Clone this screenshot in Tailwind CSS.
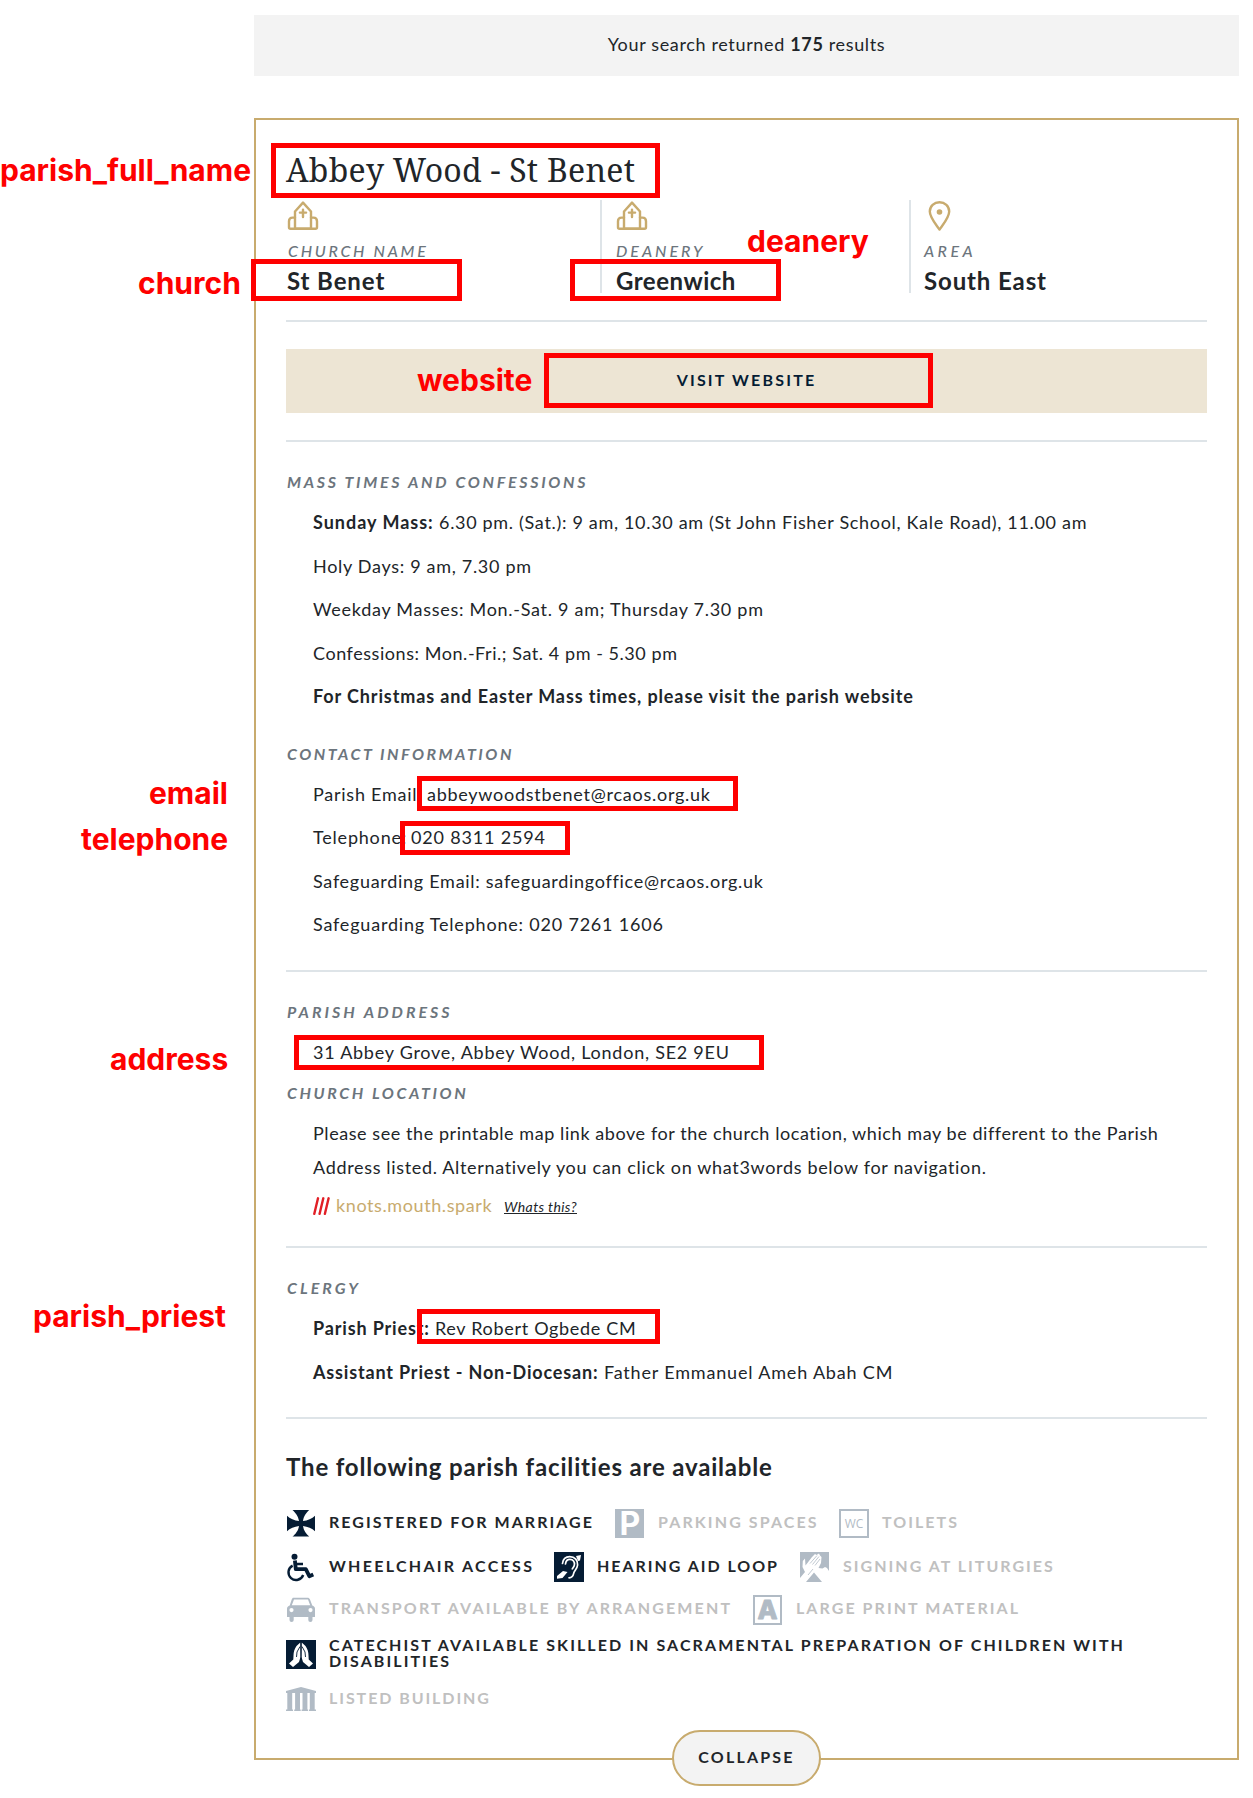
<!DOCTYPE html>
<html lang="en">
<head>
<meta charset="utf-8">
<title>Parish search results</title>
<script src="https://cdn.jsdelivr.net/npm/@tailwindcss/browser@4"></script>
</head>
<body class="bg-white text-[#212529] font-['Lato',sans-serif]">
<svg class="hidden">
  <symbol id="church" viewBox="0 0 32 32">
    <g fill="none" stroke="#c8ab6e" stroke-width="2.4" stroke-linejoin="round" stroke-linecap="round">
      <path d="M8 28.8V11.5L16 2.6l8 8.9v17.3z"/>
      <path d="M8 17.6H5.6Q2 17.6 2 21.2v6.1q0 1.5 1.5 1.5H28.5q1.5 0 1.5-1.5v-6.1q0-3.600-3.600-3.600H24"/>
      <path d="M16 9.600v7.400M12.900 12.600h6.200"/>
    </g>
  </symbol>
</svg>
<main class="relative w-[1253px] h-[1798px] overflow-hidden whitespace-nowrap pt-[15px] pl-[254px]">
  <p class="w-[985px] h-[61px] bg-[#f3f3f3] text-center text-[18px] leading-[58px] tracking-[0.65px]">Your search returned <b>175</b> results</p>

  <article class="relative mt-[42px] w-[985px] h-[1642px] border-2 border-[#c8ab6e] px-[30px]">
    <h1 class="mt-[30px] text-[32px] leading-[40px] font-['Noto_Serif',serif] tracking-[0.24px]">Abbey Wood - St Benet</h1>

    <div class="mt-[10px] h-[93px] flex">
      <div class="w-[314px] pl-px">
        <svg class="size-8"><use href="#church"/></svg>
        <p class="mt-2 pl-px h-[22px] leading-[22px] text-[16px] italic font-medium text-[#6c757d] tracking-[2.700px]">CHURCH NAME</p>
        <p class="mt-[5px] h-[27px] leading-[27px] text-[24px] font-bold tracking-[0.900px]">St Benet</p>
      </div>
      <div class="w-[309px] border-l-2 border-[#dee4e8] pl-3.5">
        <svg class="size-8"><use href="#church"/></svg>
        <p class="mt-2 h-[22px] leading-[22px] text-[16px] italic font-medium text-[#6c757d] tracking-[3px]">DEANERY</p>
        <p class="mt-[5px] h-[27px] leading-[27px] text-[24px] font-bold tracking-[0.500px]">Greenwich</p>
      </div>
      <div class="border-l-2 border-[#dee4e8] pl-[13px]">
        <svg class="size-8" viewBox="0 0 32 32" fill="none" stroke="#c8ab6e" stroke-width="2.400" stroke-linejoin="round"><path d="M15.500 29.600C12 24.500 5.800 17.500 5.800 11.500a9.700 9.300 0 0 1 19.400 0c0 6-6.200 13-9.700 18.100z"/><circle cx="15.500" cy="12" r="2.800" fill="#c8ab6e" stroke="none"/></svg>
        <p class="mt-2 h-[22px] leading-[22px] text-[16px] italic font-medium text-[#6c757d] tracking-[3.400px]">AREA</p>
        <p class="mt-[5px] h-[27px] leading-[27px] text-[24px] font-bold tracking-[0.870px]">South East</p>
      </div>
    </div>

    <hr class="mt-[27px] border-t-2 border-[#dee4e8]">
    <a class="mt-[27px] block h-16 bg-[#ede5d4] text-center text-[16px] leading-[62px] font-bold text-[#051c34] tracking-[2.200px]">VISIT WEBSITE</a>
    <hr class="mt-[27px] border-t-2 border-[#dee4e8]">

    <h2 class="mt-[29px] pl-px h-[22px] leading-[22px] text-[16px] italic font-bold text-[#6c757d] tracking-[2.700px]">MASS TIMES AND CONFESSIONS</h2>
    <div class="mt-[12px] pl-[27px] mb-[30px] flex flex-col gap-[9.500px] text-[18px] leading-[34px]">
      <p><b class="tracking-[0.980px]">Sunday Mass: </b><span class="tracking-[0.680px]">6.30 pm. (Sat.): 9 am, 10.30 am (St John Fisher School, Kale Road), 11.00 am</span></p>
      <p class="tracking-[0.690px]">Holy Days: 9 am, 7.30 pm</p>
      <p class="tracking-[0.720px]">Weekday Masses: Mon.-Sat. 9 am; Thursday 7.30 pm</p>
      <p class="tracking-[0.554px]">Confessions: Mon.-Fri.; Sat. 4 pm - 5.30 pm</p>
      <p class="-mt-[0.500px] font-bold tracking-[0.886px]">For Christmas and Easter Mass times, please visit the parish website</p>
    </div>

    <h2 class="pl-px h-[22px] leading-[22px] text-[16px] italic font-bold text-[#6c757d] tracking-[2.500px]">CONTACT INFORMATION</h2>
    <div class="mt-[12px] pl-[27px] flex flex-col gap-[9.500px] text-[18px] leading-[34px]">
      <p class="flex"><span class="w-[114px] tracking-[0.750px]">Parish Email:</span><span class="tracking-[0.738px]">abbeywoodstbenet@rcaos.org.uk</span></p>
      <p class="flex"><span class="w-[98px] tracking-[0.800px]">Telephone:</span><span class="tracking-[0.827px]">020 8311 2594</span></p>
      <p class="tracking-[0.718px]">Safeguarding Email: safeguardingoffice@rcaos.org.uk</p>
      <p class="tracking-[0.800px]">Safeguarding Telephone: 020 7261 1606</p>
    </div>
    <hr class="mt-[29px] border-t-2 border-[#dee4e8]">

    <h2 class="mt-[29px] pl-px h-[22px] leading-[22px] text-[16px] italic font-bold text-[#6c757d] tracking-[3px]">PARISH ADDRESS</h2>
    <p class="mt-[12px] pl-[27px] text-[18px] leading-[34px] tracking-[0.750px]">31 Abbey Grove, Abbey Wood, London, SE2 9EU</p>
    <h2 class="mt-[13px] pl-px h-[22px] leading-[22px] text-[16px] italic font-bold text-[#6c757d] tracking-[2.600px]">CHURCH LOCATION</h2>
    <p class="mt-[12px] pl-[27px] text-[18px] leading-[34px]"><span class="tracking-[0.571px]">Please see the printable map link above for the church location, which may be different to the Parish</span><br><span class="tracking-[0.666px]">Address listed. Alternatively you can click on what3words below for navigation.</span></p>
    <div class="mt-[10px] pl-[27px] h-[22px] flex items-center text-[18px] leading-[22px]">
      <svg class="w-[17px] h-[18px] mr-1.5 mt-0.5" viewBox="0 0 17 18" stroke="#e11f26" stroke-width="2.400" stroke-linecap="round"><path d="M1.300 16.800L5 1.300M6.600 16.800L10.300 1.300M11.900 16.800L15.600 1.300"/></svg>
      <a class="w-[168px] text-[#c8ab6e] tracking-[0.600px]">knots.mouth.spark</a>
      <a class="pt-1 text-[14px] italic underline tracking-[0.400px]">Whats this?</a>
    </div>
    <hr class="mt-[30px] border-t-2 border-[#dee4e8]">

    <h2 class="mt-[29px] pl-px h-[22px] leading-[22px] text-[16px] italic font-bold text-[#6c757d] tracking-[3px]">CLERGY</h2>
    <div class="mt-[12px] pl-[27px] flex flex-col gap-[9.500px] text-[18px] leading-[34px]">
      <p><b class="tracking-[0.850px]">Parish Priest: </b><span class="tracking-[0.690px]">Rev Robert Ogbede CM</span></p>
      <p class="tracking-[0.830px]"><b>Assistant Priest - Non-Diocesan:</b> Father Emmanuel Ameh Abah CM</p>
    </div>
    <hr class="mt-[28.500px] border-t-2 border-[#dee4e8]">

    <h3 class="mt-[33px] leading-[30px] text-[24px] font-bold tracking-[0.832px]">The following parish facilities are available</h3>

    <div class="mt-[27px] text-[16px] font-bold leading-[26px] [&_svg]:size-[30px] [&_svg]:shrink-0 [&_svg]:overflow-visible">
      <div class="flex h-[43px]">
        <div class="flex gap-[13px] w-[329px]">
          <svg viewBox="0 0 30 30" fill="#051c34"><path d="M6.500.9h16.700c-2.900 2.500-5.700 6.700-6.200 11.100C21.500 11.500 26.200 9.500 29 6.700v15.600c-2.800-2.800-7.500-4.800-12-5.300.5 4.400 3.300 8.300 6.200 10.600H6.500c2.900-2.300 6-6.200 6.500-10.600-4.500.5-9.200 2.500-12 5.300V6.700c2.800 2.800 7.500 4.800 12 5.300C12.500 7.600 9.400 3.400 6.500.9z"/></svg>
          <span class="tracking-[2.048px]">REGISTERED FOR MARRIAGE</span>
        </div>
        <div class="flex gap-[13px] w-[224px]">
          <svg viewBox="0 0 30 30"><path fill="#b1bbc5" d="M0 0h29v29H0z"/><text x="4.500" y="26" font-family="Inter" font-weight="700" font-size="32" fill="#fff">P</text></svg>
          <span class="text-[#c0c0c0] tracking-[2.100px]">PARKING SPACES</span>
        </div>
        <div class="flex gap-[13px]">
          <svg viewBox="0 0 30 30"><path fill="none" stroke="#b1bbc5" stroke-width="2" d="M1 1h28v27H1z"/><text x="5.800" y="19.300" textLength="18.500" lengthAdjust="spacingAndGlyphs" font-family="Open Sans" font-weight="500" font-size="13" fill="#b1bbc5">WC</text></svg>
          <span class="text-[#c0c0c0] tracking-[2.040px]">TOILETS</span>
        </div>
      </div>
      <div class="flex h-[43px] leading-[28px]">
        <div class="flex gap-[13px] w-[268px]">
          <svg viewBox="0 0 30 30" fill="none" stroke="#051c34" stroke-linejoin="round"><circle cx="8.500" cy="4.700" r="3" fill="#051c34" stroke="none"/><path stroke-width="3.800" d="M8.900 8.500L9.800 17.200H19.800L23.300 24.200 27.300 22.400"/><path stroke-width="2.400" d="M9.500 12h7.500M6.600 13.600A7.600 7.600 0 1 0 17.200 23"/></svg>
          <span class="tracking-[2.290px]">WHEELCHAIR ACCESS</span>
        </div>
        <div class="flex gap-[13px] w-[246px]">
          <svg viewBox="0 0 30 30"><path fill="#051c34" d="M0 0h30v30H0z"/><g fill="none" stroke="#fff" stroke-width="1.700" stroke-linecap="round"><path d="M8.500 11.500C9 7 12 4.600 15.700 4.600c5.300 0 8.300 3.900 7.900 8.400-.4 4-3.300 5.400-4 8.600-.4 2-1 4-4.600 4.200"/><path d="M11.500 12c.3-3 2-4.600 4.400-4.600 3.300 0 4.900 2.600 4.500 5.500-.2 1.800-1.300 2.800-2.100 4"/></g><path fill="#fff" d="M3 24l6-5 4.500 1-5 6-5.500.8zM22 4l5-1-1 5.500-2 .5z"/></svg>
          <span class="tracking-[1.962px]">HEARING AID LOOP</span>
        </div>
        <div class="flex gap-[13px]">
          <svg viewBox="0 0 30 30"><path fill="#b1bbc5" d="M0 0h29v30H0z"/><path fill="#fff" d="M0 26L5 20 2.500 15 2.800 9 5 6.500l.5 7L12 5l3-3 1.500 1L19 1.500l1 2 1.500 1.500-.5 6-2.500 5 4 .5 2.500-1.500 2 1 2 3V30h-7L14 20.500 6 30H0z"/><path stroke="#b1bbc5" stroke-width=".8" d="M10 11.500l7-8M12.500 12.500l6.500-8M15 13.500l5-6.500M8 23l5-6"/></svg>
          <span class="text-[#c0c0c0] tracking-[2.020px]">SIGNING AT LITURGIES</span>
        </div>
      </div>
      <div class="flex h-[43px]">
        <div class="flex gap-[13px] w-[467px]">
          <svg viewBox="0 0 30 30" fill="#b1bbc5"><path fill-rule="evenodd" d="M7.500 2.700h14c1.200 0 2 .6 2.400 1.600l2.400 6.200c1.500.5 2.700 1.600 2.700 3.200v8.200H26.500v3a2 2 0 0 1-4.200 0v-3H7.700v3a2 2 0 0 1-4.200 0v-3H1v-8.200c0-1.600 1.200-2.700 2.700-3.200l2.100-6.200c.4-1 .8-1.600 1.700-1.600zm.5 1.800L5.800 10.300h18.400L22 4.500zM5.500 13a2.100 2.100 0 1 0 0 4.200 2.100 2.100 0 0 0 0-4.200zm19 0a2.100 2.100 0 1 0 0 4.200 2.100 2.100 0 0 0 0-4.200z"/></svg>
          <span class="text-[#c0c0c0] tracking-[2.140px]">TRANSPORT AVAILABLE BY ARRANGEMENT</span>
        </div>
        <div class="flex gap-[13px]">
          <svg viewBox="0 0 30 30"><path fill="none" stroke="#b1bbc5" stroke-width="2" d="M1 1h27v28H1z"/><text x="14.500" y="24.300" text-anchor="middle" font-family="Inter" font-weight="800" font-size="26" fill="#b1bbc5" stroke="#b1bbc5" stroke-width=".8" stroke-linejoin="round">A</text></svg>
          <span class="text-[#c0c0c0] tracking-[2.060px]">LARGE PRINT MATERIAL</span>
        </div>
      </div>
      <div class="flex h-[46px] gap-[13px] pt-[2px]">
        <svg viewBox="0 0 30 30"><path fill="#051c34" d="M0 0h30v29H0z"/><path fill="#fff" d="M14.300 2.500L10.500 6C8.500 9 7.500 12 7.500 15.500L7.300 19.500 3 23.500l4 3.500 6-5 1.500-5zM15.700 2.500L19.500 6c2 3 3 6 3 9.500l.2 4 4.300 4-4 3.500-6-5-1.500-5z"/><path fill="none" stroke="#051c34" stroke-width=".9" d="M10.500 17l.5-5 3-5.500M19.500 17l-.5-5-3-5.500M15 2v20"/></svg>
        <span class="-mt-[3px] leading-4"><span class="tracking-[2.081px]">CATECHIST AVAILABLE SKILLED IN SACRAMENTAL PREPARATION OF CHILDREN WITH</span><br><span class="tracking-[2.068px]">DISABILITIES</span></span>
      </div>
      <div class="flex h-[30px] gap-[13px] leading-[28px]">
        <svg viewBox="0 0 30 30" fill="#b1bbc5"><path d="M0 7L15 3l15 4v2H0zM1.300 9h4.900v17H1.300zM9.100 9h4.900v17H9.100zM16.500 9h4.900v17h-4.900zM23.800 9h4.900v17h-4.900zM0 25.500h7V27H0zM8.200 25.500h6.500V27H8.200zM15.600 25.500h6.500V27h-6.500zM23 25.500h7V27h-7z"/></svg>
        <span class="text-[#c0c0c0] tracking-[1.926px]">LISTED BUILDING</span>
      </div>
    </div>

    <button class="absolute left-[416px] top-[1610px] w-[149px] h-14 rounded-[28px] border-2 border-[#c8ab6e] bg-[#f3f3f3] pb-0.5 text-[16px] font-bold tracking-[2.200px]">COLLAPSE</button>
  </article>

  <!-- Field annotations laid over the page -->
  <div class="absolute inset-0 pointer-events-none [&_i]:absolute [&_i]:border-[5px] [&_i]:border-[#fe0000] [&_b]:absolute [&_b]:text-[30px] [&_b]:leading-[36px] [&_b]:text-[#fe0000] font-['Inter',sans-serif]">
    <i class="left-[271px] top-[143px] w-[389px] h-[55px]"></i>
    <i class="left-[251px] top-[259px] w-[211px] h-[42px]"></i>
    <i class="left-[570px] top-[259px] w-[211px] h-[42px]"></i>
    <i class="left-[544px] top-[353px] w-[389px] h-[55px]"></i>
    <i class="left-[417px] top-[776px] w-[321px] h-[35px]"></i>
    <i class="left-[400px] top-[821px] w-[170px] h-[34px]"></i>
    <i class="left-[294px] top-[1035px] w-[470px] h-[35px]"></i>
    <i class="left-[417px] top-[1309px] w-[243px] h-[35px]"></i>
    <b class="left-0 top-[152px]">parish_full_name</b>
    <b class="left-[138px] top-[265px]">church</b>
    <b class="left-[747px] top-[223px]">deanery</b>
    <b class="left-[417px] top-[362px]">website</b>
    <b class="left-[149px] top-[775px]">email</b>
    <b class="left-[81px] top-[821px]">telephone</b>
    <b class="left-[110px] top-[1041px]">address</b>
    <b class="left-[33px] top-[1298px]">parish_priest</b>
  </div>
</main>
</body>
</html>
